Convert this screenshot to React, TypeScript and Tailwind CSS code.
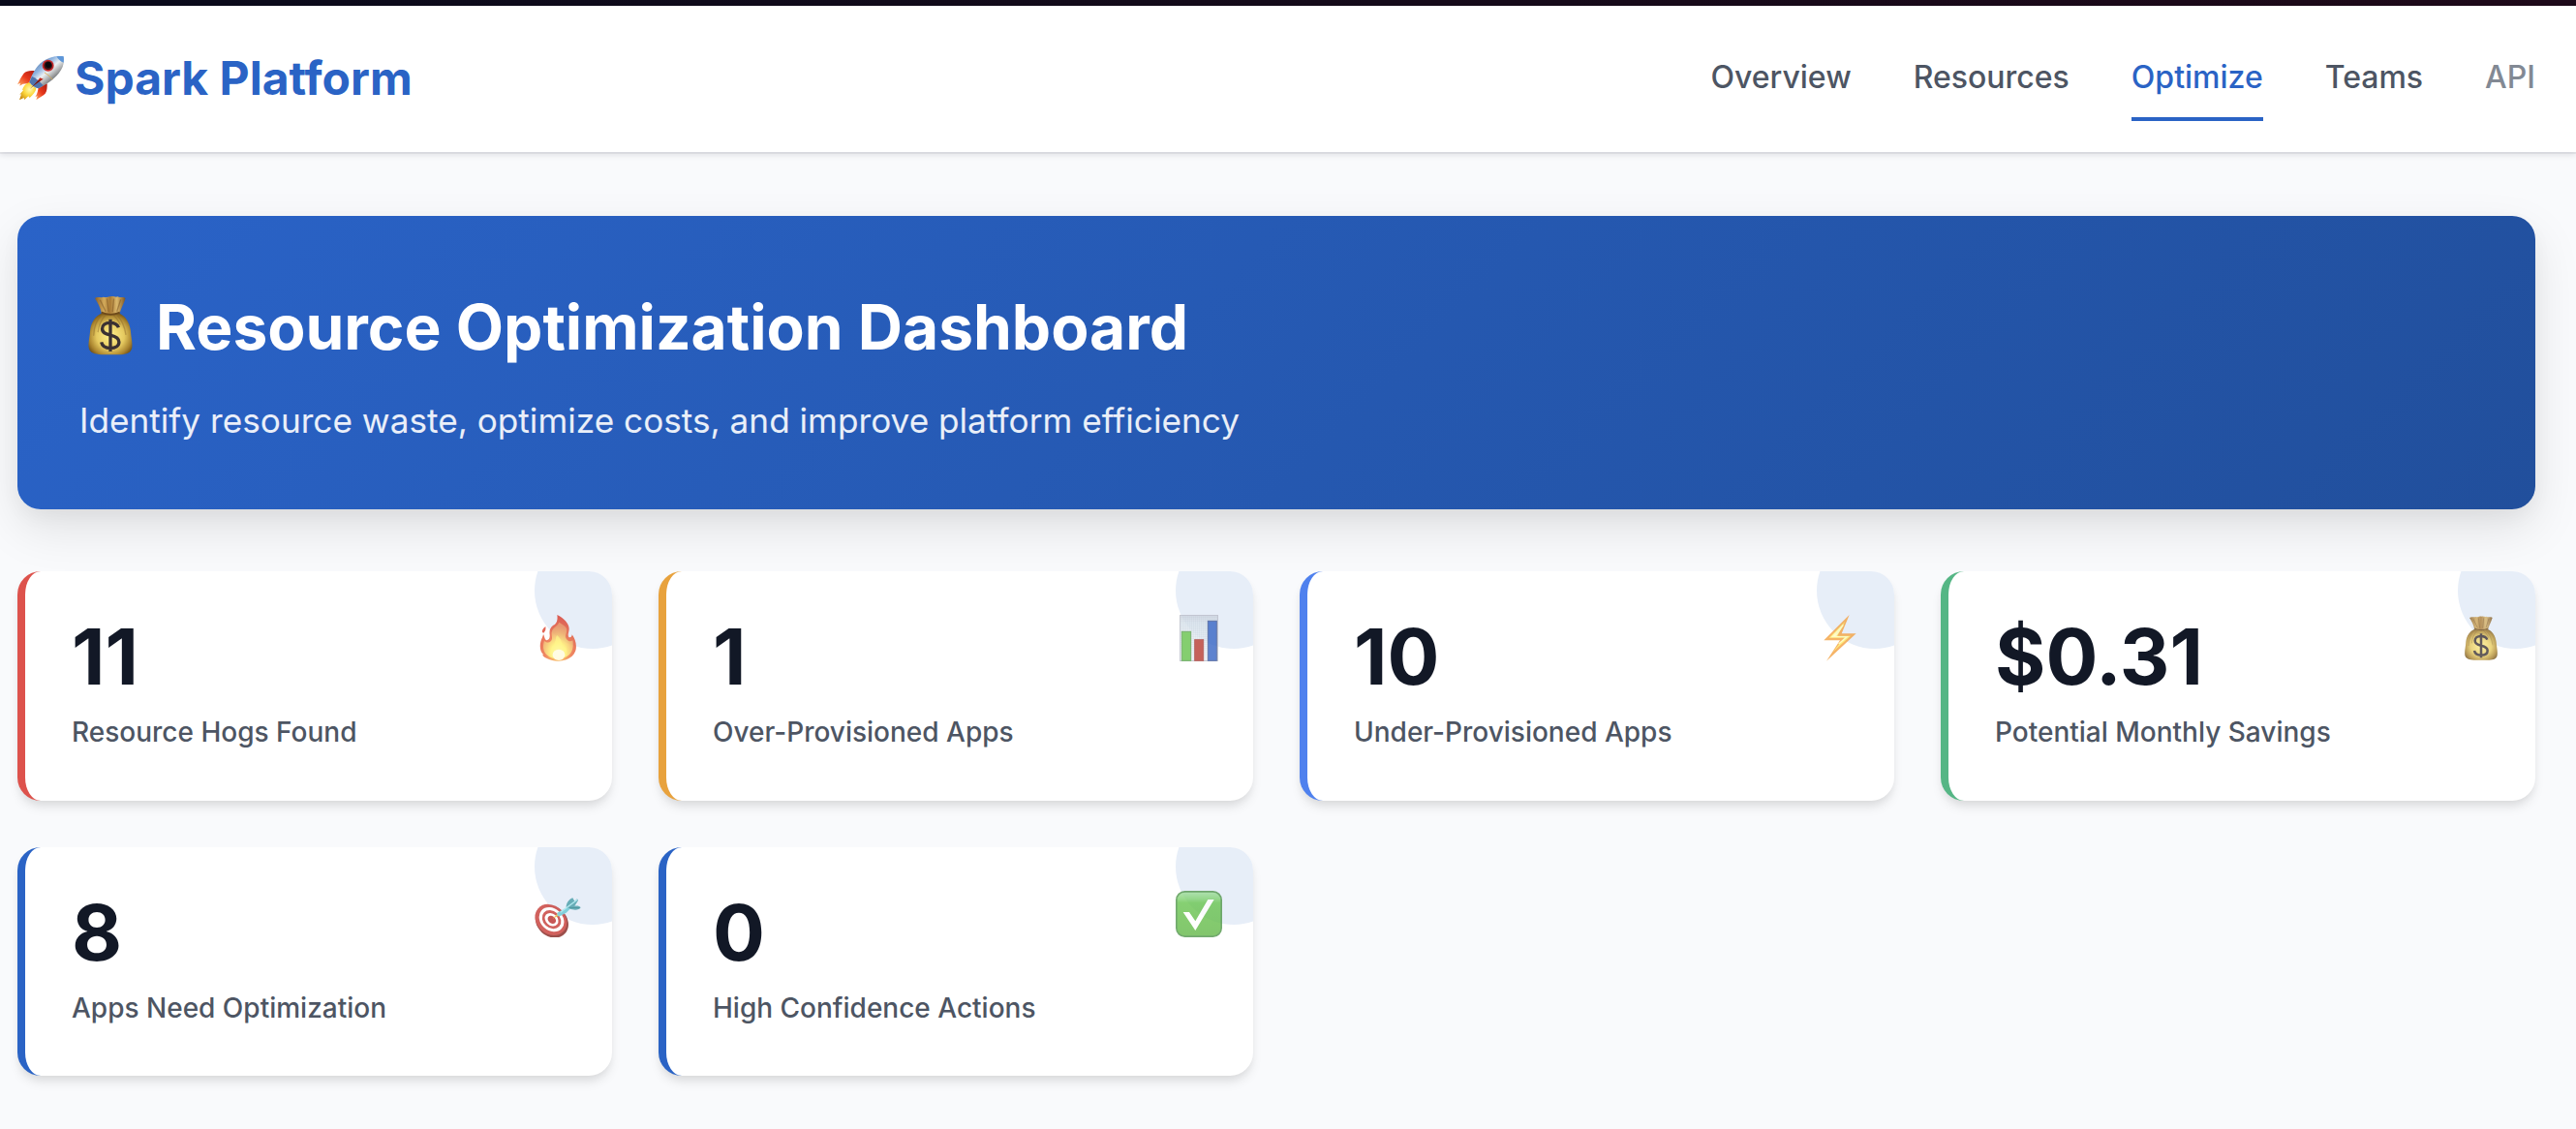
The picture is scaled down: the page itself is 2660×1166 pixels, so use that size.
import React from "react";

function Rocket({ className }: { className: string }) {
  return (
    <svg viewBox="0 0 144 144" className={className} aria-hidden="true">
      <defs>
        <linearGradient id="rkBody" x1="0.2" y1="0.15" x2="0.8" y2="0.8">
          <stop offset="0" stopColor="#5b7fae" />
          <stop offset="0.3" stopColor="#8fb4e0" />
          <stop offset="0.52" stopColor="#eef1f2" />
          <stop offset="0.72" stopColor="#a9abac" />
          <stop offset="1" stopColor="#3f4347" />
        </linearGradient>
        <linearGradient id="rkFin" x1="1" y1="0" x2="0" y2="1">
          <stop offset="0" stopColor="#a81b12" />
          <stop offset="0.5" stopColor="#e8371b" />
          <stop offset="1" stopColor="#ffb066" />
        </linearGradient>
        <radialGradient id="rkFlame" cx="0.6" cy="0.4" r="0.7">
          <stop offset="0" stopColor="#fffbb0" />
          <stop offset="0.5" stopColor="#fcd63a" />
          <stop offset="1" stopColor="#c98a12" />
        </radialGradient>
      </defs>
      <path d="M58 49C42 46 27 48 20 56C12 66 6 79 0 91L9 86L7 95L17 89L38 87Z" fill="url(#rkFin)" />
      <path d="M65 99L92 88C92 100 92 112 86 119C78 126 68 131 58 139L62 126L55 130C62 119 64 109 65 99Z" fill="url(#rkFin)" />
      <path d="M36 84C24 90 18 97 15 108L19 107L7 122L12 121L6 139L20 132L22 138L34 127L38 132C49 122 57 113 58 102Z" fill="url(#rkFlame)" />
      <path d="M37 112L46 96L51 100Z" fill="#fff9a8" />
      <path d="M143 4C119 1 97 6 77 20C57 35 45 59 37 83C44 94 54 100 65 103C88 91 111 77 128 56C142 39 146 22 143 4Z" fill="url(#rkBody)" />
      <path d="M143 4C138 3 129 3 121 4C127 14 134 20 143 23C144 16 144 9 143 4Z" fill="#5d96d8" />
      <path d="M37 83L45 66C56 70 68 80 80 94L65 103C54 100 44 94 37 83Z" fill="#4f75ad" />
      <path d="M84 54C94 60 103 67 108 76" stroke="#d6a950" strokeWidth="2.5" fill="none" />
      <path d="M70 70L44 101L40 106L50 94L80 74Z" fill="#c3271a" />
      <path d="M65 78L39 104L56 90L74 77Z" fill="#651b1b" />
      <circle cx="95" cy="32" r="18" fill="#c62a2c" />
      <circle cx="95" cy="32" r="13" fill="#3a1013" />
      <circle cx="96" cy="30" r="9" fill="#08080c" />
    </svg>
  );
}

function MoneyBag({ className }: { className: string }) {
  return (
    <svg viewBox="0 0 144 144" className={className} aria-hidden="true">
      <defs>
        <radialGradient id="mbBody" cx="0.5" cy="0.55" r="0.58">
          <stop offset="0" stopColor="#fff08c" />
          <stop offset="0.55" stopColor="#e5c95f" />
          <stop offset="0.85" stopColor="#a9832e" />
          <stop offset="1" stopColor="#76561b" />
        </radialGradient>
        <linearGradient id="mbTop" x1="0" y1="0" x2="1" y2="0">
          <stop offset="0" stopColor="#8a5f26" />
          <stop offset="0.3" stopColor="#d2a95a" />
          <stop offset="0.5" stopColor="#a97a35" />
          <stop offset="0.72" stopColor="#dab76c" />
          <stop offset="1" stopColor="#7d5421" />
        </linearGradient>
      </defs>
      <path d="M52 44C37 50 27 65 25 84C24 101 20 113 22 125C24 136 36 139 50 140H97C112 139 120 135 122 125C124 113 120 101 119 84C116 65 107 50 92 44Z" fill="url(#mbBody)" />
      <path d="M50 50C39 60 34 76 33 96M61 48C49 60 45 73 43 88M87 48C98 59 105 74 108 94M78 48C86 54 91 62 95 71" stroke="#8b692a" strokeOpacity="0.45" strokeWidth="3" fill="none" />
      <path d="M36 9C43 4 50 9 56 6C63 9 67 4 73 5C79 3 84 8 89 5C95 9 101 5 107 9C104 20 97 32 94 43C81 49 63 49 51 43C49 31 43 20 36 9Z" fill="url(#mbTop)" />
      <path d="M48 13L61 40M64 10L68 41M80 10L77 41M96 12L87 40" stroke="#79521f" strokeOpacity="0.5" strokeWidth="3" />
      <path d="M51 42C64 48 81 48 94 42" stroke="#6e4a1a" strokeWidth="4" fill="none" />
      <path d="M91 77C88 69 80 66 71 66C60 66 53 72 53 80C53 89 60 92 72 95C85 98 92 102 92 111C92 120 84 125 72 125C61 125 53 120 51 111M72 58V133" stroke="#3a3133" strokeWidth="7.5" fill="none" />
    </svg>
  );
}

function Fire({ className }: { className: string }) {
  return (
    <svg viewBox="0 0 144 144" className={className} aria-hidden="true">
      <defs>
        <radialGradient id="frOut" cx="0.5" cy="0.85" r="0.8">
          <stop offset="0" stopColor="#ffd34d" />
          <stop offset="0.45" stopColor="#ec6a3a" />
          <stop offset="1" stopColor="#d93a2c" />
        </radialGradient>
        <radialGradient id="frIn" cx="0.5" cy="0.82" r="0.72">
          <stop offset="0" stopColor="#fffde0" />
          <stop offset="0.35" stopColor="#fff06a" />
          <stop offset="0.75" stopColor="#f0a458" />
          <stop offset="1" stopColor="#e88350" />
        </radialGradient>
      </defs>
      <path d="M34 36C30 40 23 44 24 54L28 56C35 50 35 43 34 36Z" fill="#dc4330" />
      <path d="M70 0C90 10 108 27 107 45C106 55 102 63 106 69C111 71 116 68 116 61C126 75 132 94 127 111C124 119 120 125 115 129C103 138 87 144 72 143C57 144 39 137 28 129L24 124H28C18 115 15 99 19 83C22 72 26 68 27 60C31 65 30 75 37 79C44 77 48 72 47 62C45 49 48 40 57 33C66 28 73 20 70 0Z" fill="url(#frOut)" />
      <path d="M76 23C72 35 58 38 54 50C50 63 59 73 50 82C43 89 35 85 30 80C24 99 27 113 38 124C58 142 88 141 108 123C120 112 121 93 118 79C112 84 105 83 99 75C91 64 102 57 99 43C96 33 84 30 76 23Z" fill="url(#frIn)" />
      <path d="M69 63C63 77 67 86 56 97C48 106 50 124 63 134C81 142 97 132 99 114C100 101 94 99 87 101C85 88 83 73 69 63Z" fill="#fff36e" fillOpacity="0.7" />
      <ellipse cx="75" cy="124" rx="19" ry="17" fill="#fffde8" fillOpacity="0.9" />
    </svg>
  );
}

function BarChart({ className }: { className: string }) {
  return (
    <svg viewBox="0 0 144 144" className={className} aria-hidden="true">
      <defs>
        <linearGradient id="bcBg" x1="0" y1="0" x2="0" y2="1">
          <stop offset="0" stopColor="#cdd2dd" />
          <stop offset="0.18" stopColor="#dce6ee" />
          <stop offset="1" stopColor="#f0f2f6" />
        </linearGradient>
        <pattern id="bcGrid" width="6" height="6" patternUnits="userSpaceOnUse">
          <path d="M0 0H6M0 0V6" stroke="#9fb1c6" strokeOpacity="0.45" strokeWidth="1.5" />
        </pattern>
      </defs>
      <rect x="12" y="0" width="120" height="144" fill="url(#bcBg)" />
      <rect x="13.5" y="1.5" width="117" height="141" fill="url(#bcGrid)" stroke="#b9bcc8" strokeWidth="3" />
      <rect x="19" y="52" width="28" height="90" fill="#66c24c" stroke="#559f49" strokeWidth="3" />
      <rect x="59" y="77" width="27" height="65" fill="#b73a30" stroke="#a6403b" strokeWidth="3" />
      <rect x="100" y="19" width="27" height="123" fill="#3665c4" stroke="#3c5695" strokeWidth="3" />
    </svg>
  );
}

function Bolt({ className }: { className: string }) {
  return (
    <svg viewBox="0 0 144 144" className={className} aria-hidden="true">
      <path d="M101 0L22 79H72L30 143L122 58H77L101 0Z" fill="#f4a242" />
      <path d="M88 20L38 71H85L50 115L105 65H64Z" fill="#ffe75c" />
      <path d="M82 31L48 68H93L68 90L94 68H57Z" fill="#fffdc8" stroke="#fffbb5" strokeWidth="4" />
    </svg>
  );
}

function Target({ className }: { className: string }) {
  return (
    <svg viewBox="0 0 144 144" className={className} aria-hidden="true">
      <g transform="rotate(42 50 92)">
        <ellipse cx="55" cy="92" rx="55" ry="46" fill="#84241f" />
        <ellipse cx="49" cy="90" rx="53" ry="44" fill="#c63a35" />
        <ellipse cx="50" cy="88" rx="42" ry="34" fill="#ffffff" />
        <ellipse cx="50" cy="88" rx="32" ry="26" fill="#c63a35" />
        <ellipse cx="50" cy="88" rx="23" ry="18" fill="#ffffff" />
        <ellipse cx="51" cy="88" rx="14" ry="11" fill="#b92d2b" />
      </g>
      <path d="M56 86L72 70L78 76Z" fill="#e8ba37" />
      <path d="M70 68L92 56L106 48L112 54L98 68L78 79C72 80 69 74 70 68Z" fill="#69c9d5" />
      <path d="M98 51C98 40 104 28 118 22L124 32L132 25L135 30L124 47C133 46 140 47 143 52C138 60 123 62 108 55Z" fill="#489da8" />
      <path d="M80 67L132 28" stroke="#a5e8ed" strokeWidth="4" />
      <path d="M108 52L140 53" stroke="#2d8189" strokeWidth="3" />
    </svg>
  );
}

function CheckBox({ className }: { className: string }) {
  return (
    <svg viewBox="0 0 144 144" className={className} aria-hidden="true">
      <defs>
        <linearGradient id="ckBg" x1="0" y1="0" x2="0" y2="1">
          <stop offset="0" stopColor="#a3dfa0" />
          <stop offset="0.16" stopColor="#82d272" />
          <stop offset="0.25" stopColor="#68c550" />
          <stop offset="1" stopColor="#64b848" />
        </linearGradient>
      </defs>
      <rect x="2.5" y="2.5" width="139" height="139" rx="26" fill="url(#ckBg)" stroke="#50954a" strokeWidth="5" />
      <path d="M23 66H42L61 94L100 27H119L61 123Z" fill="#ffffff" />
    </svg>
  );
}

type IconType = (props: { className: string }) => React.JSX.Element;

const stats: { value: string; label: string; border: string; Icon: IconType }[] = [
  { value: "11", label: "Resource Hogs Found", border: "border-[#dd524c]", Icon: Fire },
  { value: "1", label: "Over-Provisioned Apps", border: "border-[#e8a23d]", Icon: BarChart },
  { value: "10", label: "Under-Provisioned Apps", border: "border-[#4f81ee]", Icon: Bolt },
  { value: "$0.31", label: "Potential Monthly Savings", border: "border-[#55b685]", Icon: MoneyBag },
  { value: "8", label: "Apps Need Optimization", border: "border-[#2a63c5]", Icon: Target },
  { value: "0", label: "High Confidence Actions", border: "border-[#2a63c5]", Icon: CheckBox },
];

const links = [
  { label: "Overview", style: "border-transparent text-[#4d5563]" },
  { label: "Resources", style: "border-transparent text-[#4d5563]" },
  { label: "Optimize", style: "border-[#2a63c5] text-[#2a63c5]" },
  { label: "Teams", style: "border-transparent text-[#4d5563]" },
  { label: "API", style: "border-transparent text-[#828994]" },
];

export default function App() {
  return (
    <div className="h-[1166px] overflow-hidden bg-[#f9fafc] font-['Inter',sans-serif] leading-[1.6]">
      <div className="h-[6px] bg-linear-to-r from-[#090a1b] to-[#1e0919]" />
      <header className="relative flex h-[151px] items-center justify-between bg-white pr-[42px] pl-[18px] shadow-[0_2px_0_rgba(20,20,50,0.06),0_3px_6px_rgba(20,20,40,0.11)]">
        <div className="flex items-center text-[48px] font-bold text-[#2a63c5]">
          <Rocket className="mr-[11px] size-12" />
          <span>Spark Platform</span>
        </div>
        <nav className="flex gap-16 text-[32px] font-medium">
          {links.map((l) => (
            <a key={l.label} className={`border-b-4 py-4 ${l.style}`}>{l.label}</a>
          ))}
        </nav>
      </header>
      <main className="pt-[66px] pr-[42px] pl-[18px]">
        <section className="mb-16 h-[303px] rounded-[24px] bg-[linear-gradient(135deg,#2a63c8_0%,#214f9c_100%)] p-16 text-white shadow-[0_20px_50px_rgba(0,0,0,0.1),0_8px_20px_rgba(0,0,0,0.04)]">
          <h1 className="mb-[17px] flex items-center text-[64px] font-bold">
            <MoneyBag className="mr-[15px] mb-1 size-16" />
            <span>Resource Optimization Dashboard</span>
          </h1>
          <p className="text-[35.2px] text-white/90">
            Identify resource waste, optimize costs, and improve platform efficiency
          </p>
        </section>
        <section className="grid grid-cols-4 gap-12">
          {stats.map(({ value, label, border, Icon }) => (
            <div key={label} className={`rounded-[24px] border-l-8 bg-white shadow-[0_8px_12px_-2px_rgba(0,0,0,0.1),0_4px_8px_-2px_rgba(0,0,0,0.05)] ${border}`}>
              <div className="relative h-[236.6px] overflow-hidden rounded-r-[24px] p-12">
                <div className="absolute -top-10 -right-10 size-[120px] rounded-full bg-[#e7eef8]" />
                <Icon className="absolute top-[45px] right-8 size-12 opacity-80" />
                <div className="mb-4 text-[80px] leading-none font-bold text-[#121826]">{value}</div>
                <div className="text-[28px] font-medium text-[#4d5563]">{label}</div>
              </div>
            </div>
          ))}
        </section>
      </main>
    </div>
  );
}
